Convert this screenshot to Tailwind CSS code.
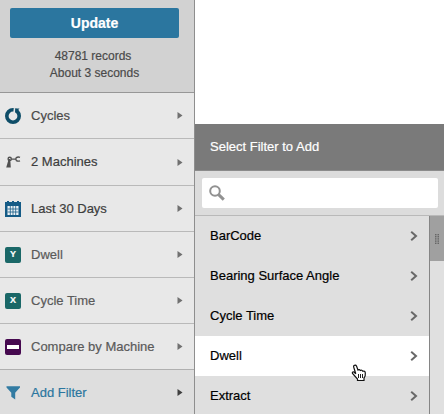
<!DOCTYPE html>
<html lang="en">
<head>
<meta charset="utf-8">
<title>Filters</title>
<script src="https://cdn.jsdelivr.net/npm/@tailwindcss/browser@4"></script>
</head>
<body class="relative flex w-[444px] h-[414px] overflow-hidden bg-white font-['Liberation_Sans',Arial,sans-serif] text-[13px] leading-4 [-webkit-text-stroke:0.2px]">
<aside class="flex flex-col w-[195px] h-[414px] shrink-0 border-r border-[#8e8e8e] bg-[#e8e8e8] text-[#4a4a4a]">
  <header class="flex flex-col items-center h-[93px] shrink-0 pt-2 pr-[8px] bg-[#d2d2d2] border-b border-[#979797] text-xs leading-[17px]">
    <button class="ml-[3px] w-[169px] h-[30px] rounded-[2px] bg-[#2b769f] text-white text-sm font-bold">Update</button>
    <p class="mt-[10px]">48781 records</p>
    <p class="ml-[3px]">About 3 seconds</p>
  </header>
  <nav class="flex flex-col">
    <a class="flex items-center h-[46px] pl-[5px] pr-[11px] border-b border-[#b9b9b9]">
      <svg class="size-4 mr-[10px]" viewBox="0 0 16 16"><circle cx="8" cy="8" r="6.200" fill="none" stroke="#0e4d68" stroke-width="3.600"/><path d="M8.800 0 10.600.2 9.800 5.500 8.300 4.500z" fill="#e8e8e8"/><path d="M10.200.4h4.300L10.500 5z" fill="#0e4d68"/></svg>
      <span class="grow">Cycles</span>
      <svg class="w-[6px] h-[7px]" viewBox="0 0 6 7"><path d="M.5 0 5.500 3.500.5 7z" fill="#707070"/></svg>
    </a>
    <a class="flex items-center h-[47px] pl-[5px] pr-[11px] border-b border-[#b9b9b9]">
      <svg class="size-4 mr-[10px]" viewBox="0 0 16 16" fill="none" stroke="#505050"><path d="M1.200 13.500h4.600L5.200 5H3.700z" fill="#505050" stroke="none"/><circle cx="4.700" cy="4.900" r="1.600" stroke-width="1.400"/><path d="M6.300 5.100h4.200M15 3.400Q13 2.500 11.400 3.600 10 5.100 11.400 6.600 13 7.500 15 6.800" stroke-width="1.400"/></svg>
      <span class="grow text-[#3d3d3d]">2 Machines</span>
      <svg class="w-[6px] h-[7px]" viewBox="0 0 6 7"><path d="M.5 0 5.500 3.500.5 7z" fill="#707070"/></svg>
    </a>
    <a class="flex items-center h-[46px] pl-[5px] pr-[11px] border-b border-[#b9b9b9]">
      <svg class="size-4 mr-[10px]" viewBox="0 0 16 16"><path d="M0 1h2V0h2v1h3V0h2v1h3V0h2v1h2v15H0z" fill="#155b86"/><path d="M2.500 5h11v9h-11z" fill="#eef3f6"/><path d="M5.300 5v9M8 5v9M10.700 5v9M2.500 8h11M2.500 11h11" stroke="#155b86" stroke-width=".8"/></svg>
      <span class="grow text-[#3d3d3d]">Last 30 Days</span>
      <svg class="w-[6px] h-[7px]" viewBox="0 0 6 7"><path d="M.5 0 5.500 3.500.5 7z" fill="#707070"/></svg>
    </a>
    <a class="flex items-center h-[46px] pl-[5px] pr-[11px] border-b border-[#b9b9b9]">
      <span class="flex items-center justify-center size-4 mr-[10px] rounded-[2px] bg-[#1a6767] text-white text-[9px] leading-none font-bold">Y</span>
      <span class="grow text-[#5a5a5a]">Dwell</span>
      <svg class="w-[6px] h-[7px]" viewBox="0 0 6 7"><path d="M.5 0 5.500 3.500.5 7z" fill="#707070"/></svg>
    </a>
    <a class="flex items-center h-[46px] pl-[5px] pr-[11px] border-b border-[#b9b9b9]">
      <span class="flex items-center justify-center size-4 mr-[10px] rounded-[2px] bg-[#1a6767] text-white text-[9px] leading-none font-bold">X</span>
      <span class="grow text-[#5a5a5a]">Cycle Time</span>
      <svg class="w-[6px] h-[7px]" viewBox="0 0 6 7"><path d="M.5 0 5.500 3.500.5 7z" fill="#707070"/></svg>
    </a>
    <a class="flex items-center h-[46px] pl-[5px] pr-[11px] border-b border-[#b0b0b0]">
      <span class="flex items-center justify-center size-4 mr-[10px] rounded-[2px] bg-[#46094f]"><span class="w-3 h-1 bg-white"></span></span>
      <span class="grow text-[#5a5a5a]">Compare by Machine</span>
      <svg class="w-[6px] h-[7px]" viewBox="0 0 6 7"><path d="M.5 0 5.500 3.500.5 7z" fill="#707070"/></svg>
    </a>
    <a class="flex items-center h-[45px] pl-[5px] pr-[11px] bg-[#dedede] text-[#2b769f]">
      <svg class="size-4 mr-[10px]" viewBox="0 0 16 16"><path d="M1.500 1.300h13.500v1.200L10.200 7.800v6.600L6.300 11.800V7.800L1.500 2.500z" fill="#327ba2"/></svg>
      <span class="grow">Add Filter</span>
      <svg class="w-[6px] h-[7px]" viewBox="0 0 6 7"><path d="M.5 0 5.500 3.500.5 7z" fill="#3f3f3f"/></svg>
    </a>
  </nav>
</aside>
<main class="flex flex-col w-[249px] h-[290px] mt-[124px] bg-[#dfdfdf] text-black">
  <h1 class="flex items-center h-[47px] shrink-0 pl-[15px] bg-[#7a7a7a] border-b border-[#8b8b8b] text-white">Select Filter to Add</h1>
  <div class="h-[45px] shrink-0 pl-[7px] pr-[6px] pt-[7px] border-b border-[#b9b9b9] bg-[#dcdcdc]">
    <div class="h-[30px] rounded-[2px] bg-white pl-[7px] pt-[7px]">
      <svg class="size-4" viewBox="0 0 16 16" fill="none" stroke="#919191"><circle cx="6" cy="6" r="4.800" stroke-width="2"/><path d="m9.600 9.600 5.200 5" stroke-width="3"/></svg>
    </div>
  </div>
  <div class="flex h-[198px]">
    <ul class="w-[234px]">
      <li class="flex items-center justify-between h-10 pl-[15px] pr-[11px]">BarCode<svg class="w-2 h-[10px]" viewBox="0 0 8 10"><path d="m1.200.8 4.800 4.200-4.800 4.200" fill="none" stroke="#686868" stroke-width="2"/></svg></li>
      <li class="flex items-center justify-between h-10 pl-[15px] pr-[11px]">Bearing Surface Angle<svg class="w-2 h-[10px]" viewBox="0 0 8 10"><path d="m1.200.8 4.800 4.200-4.800 4.200" fill="none" stroke="#686868" stroke-width="2"/></svg></li>
      <li class="flex items-center justify-between h-10 pl-[15px] pr-[11px]">Cycle Time<svg class="w-2 h-[10px]" viewBox="0 0 8 10"><path d="m1.200.8 4.800 4.200-4.800 4.200" fill="none" stroke="#686868" stroke-width="2"/></svg></li>
      <li class="flex items-center justify-between h-10 pl-[15px] pr-[11px] bg-white">Dwell<svg class="w-2 h-[10px]" viewBox="0 0 8 10"><path d="m1.200.8 4.800 4.200-4.800 4.200" fill="none" stroke="#686868" stroke-width="2"/></svg></li>
      <li class="flex items-center justify-between h-10 pl-[15px] pr-[11px]">Extract<svg class="w-2 h-[10px]" viewBox="0 0 8 10"><path d="m1.200.8 4.800 4.200-4.800 4.200" fill="none" stroke="#686868" stroke-width="2"/></svg></li>
    </ul>
    <div class="grow border-l border-[#858585] bg-[#e0e0e0]">
      <div class="flex items-center justify-center h-[45px] bg-[#a0a0a0]">
        <svg class="w-1 h-[10px]" viewBox="0 0 4 10"><path d="M.5 0v10M2 0v10M3.500 0v10" stroke="#606060" stroke-width=".9" stroke-dasharray="1.200 .6"/></svg>
      </div>
    </div>
  </div>
</main>
<svg class="absolute left-[351px] top-[364px] w-[16px] h-[18px]" viewBox="0 0 16 18"><path d="M3 1.500Q4.500.5 5.500 2L7 6Q8.500 5 9.300 6.500 11 5.600 11.800 7.200 14 6.500 14.300 9 14.700 12 13 14V16.500H6.500V15L1.500 9.500Q.8 7.500 3 8L4.800 9.800 2.800 3.500Q2.300 2.300 3 1.500z" fill="#fff" stroke="#111" stroke-width="1.200"/><path d="M7.500 10v4M9.500 10v4M11.500 10v4" stroke="#222"/></svg>
</body>
</html>
